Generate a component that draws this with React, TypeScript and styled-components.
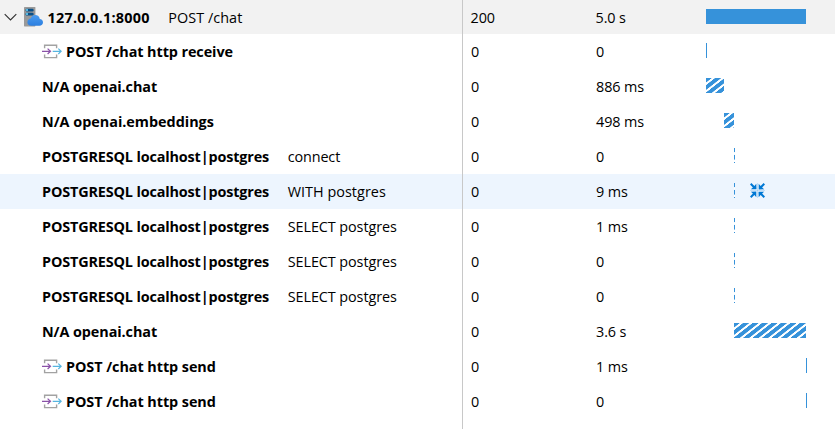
import React from 'react';
import styled, { createGlobalStyle, css } from 'styled-components';

const Global = createGlobalStyle`
  html, body { margin: 0; background: #fff; overflow: hidden; }
  * { box-sizing: border-box; }
`;

const Grid = styled.div`
  width: 835px;
  height: 429px;
  overflow: hidden;
  color: #000;
  font: 14.4px/20px "Open Sans", "Noto Sans", sans-serif;
  white-space: pre;
`;

const NameCell = styled.div<{ $indent: number }>`
  display: flex;
  align-items: center;
  padding-left: ${p => p.$indent}px;
  border-right: 1px solid #c8c8c8;
`;

const Name = styled.span<{ $spacing: number }>`
  font-weight: 700;
  letter-spacing: ${p => p.$spacing}px;
`;

const Detail = styled.span<{ $spacing: number }>`
  margin-left: 18.6px;
  letter-spacing: ${p => p.$spacing}px;
`;

const Value = styled.div`
  display: flex;
  align-items: center;
  padding-left: 8px;
  letter-spacing: -0.1px;
`;

const Row = styled.div<{ $root?: boolean; $hover?: boolean }>`
  display: grid;
  grid-template-columns: 463px 125px 118px 1fr;
  height: ${p => (p.$root ? 34 : 35)}px;
  background: ${p => (p.$root ? '#f2f2f2' : p.$hover ? '#edf5fe' : '#fff')};

  ${p => p.$root && css`
    ${Name}, ${Detail}, ${Value} { padding-top: 2px; }
    ${Value} { margin-left: -0.5px; }
  `}
`;

const Track = styled.div<{ $start: number }>`
  display: flex;
  align-items: flex-start;
  padding: 9px 0 0 ${p => p.$start}px;
`;

const Bar = styled.div<{ $width: number; $striped?: boolean }>`
  width: ${p => p.$width}px;
  height: 15px;
  background: #3692da;
  ${p => p.$striped && css`
    background: repeating-linear-gradient(142deg, #3692da 0 3.3px, #fff 3.9px 5.4px, #3692da 5.83px);
    background-size: 87px 15px;
  `}
`;

const Icon = styled.svg<{ $gap?: number }>`
  flex: none;
  display: block;
  margin-right: ${p => p.$gap ?? 0}px;
`;

const FocusIcon = styled.svg`
  display: block;
  margin-left: 15px;
`;

const Chevron = () => (
  <Icon $gap={6} width="13" height="9" viewBox="0 0 13 9">
    <path d="M.7 1.2 6.5 7 12.3 1.2" fill="none" stroke="#303030" strokeWidth="1.1" />
  </Icon>
);

const Server = () => (
  <Icon $gap={4.5} width="20" height="20" viewBox="0 0 20 20">
    <defs>
      <linearGradient id="cloud" x1="0" y1="0" x2="0" y2="1">
        <stop stopColor="#4a9cf0" />
        <stop offset="1" stopColor="#2c7fe0" />
      </linearGradient>
    </defs>
    <rect x="1" y="0" width="11.4" height="19.4" rx=".6" fill="#9a9a9a" />
    <rect x="2.6" y="1.8" width="8" height="2.7" rx="1.2" fill="#0a5088" />
    <rect x="2.6" y="5.7" width="8" height="2.7" rx="1.2" fill="#0a5088" />
    <circle cx="4" cy="3.1" r="1" fill="#70dcff" />
    <circle cx="4" cy="7" r="1" fill="#70dcff" />
    <path d="M8.2 18.8c-2.2 0-3.8-1.5-3.8-3.6 0-2 1.4-3.4 3.3-3.6.5-2.3 2.2-3.7 4.5-3.7 2.5 0 4.2 1.6 4.6 4 1.8.1 3.2 1.5 3.2 3.4 0 2-1.5 3.5-3.6 3.5Z" fill="url(#cloud)" />
  </Icon>
);

const Request = () => (
  <Icon $gap={4} width="20" height="15" viewBox="0 0 20 15">
    <path d="M2.6 4.3V1.2H14.6V4.3M2.6 10.5v3.1H14.6v-3.1" fill="none" stroke="#a2a2a2" strokeWidth="1.4" />
    <path d="M0 7.3h8.4M5.6 4.6l2.9 2.7-2.9 2.7" fill="none" stroke="#8a52a8" strokeWidth="1.2" />
    <path d="M10.7 7.3h8.4M16.3 4.6l2.9 2.7-2.9 2.7" fill="none" stroke="#57b5e0" strokeWidth="1.2" />
  </Icon>
);

const Focus = () => (
  <FocusIcon width="15" height="15" viewBox="0 0 15 15">
    <path d="M0 7.5h15M7.5 0v15" stroke="#0078d4" strokeOpacity=".18" />
    {[0, 90, 180, 270].map(angle => (
      <path key={angle} transform={`rotate(${angle} 7.5 7.5)`} d="M6.5 6.3H.8L2.9 4.4 0 1.4 1.4 0 4.4 2.9 6.3.8Z" fill="#0078d4" />
    ))}
  </FocusIcon>
);

type Span = {
  name: string; spacing: number; detail?: string; detailSpacing?: number; code: string; time: string;
  start: number; width: number; striped?: boolean; icon?: boolean; root?: boolean; hover?: boolean;
};

const database = {
  name: 'POSTGRESQL localhost|postgres', spacing: -0.14, code: '0', start: 28, width: 1, striped: true,
};

const spans: Span[] = [
  { name: '127.0.0.1:8000', spacing: 0.25, detail: 'POST /chat', detailSpacing: 0.05, code: '200', time: '5.0 s', start: 0, width: 100, root: true },
  { name: 'POST /chat http receive', spacing: -0.08, code: '0', time: '0', start: 0, width: 1, icon: true },
  { name: 'N/A openai.chat', spacing: -0.08, code: '0', time: '886 ms', start: 0, width: 18, striped: true },
  { name: 'N/A openai.embeddings', spacing: -0.01, code: '0', time: '498 ms', start: 18, width: 10, striped: true },
  { ...database, detail: 'connect', detailSpacing: -0.13, time: '0' },
  { ...database, detail: 'WITH postgres', detailSpacing: 0.03, time: '9 ms', hover: true },
  { ...database, detail: 'SELECT postgres', detailSpacing: -0.08, time: '1 ms' },
  { ...database, detail: 'SELECT postgres', detailSpacing: -0.08, time: '0' },
  { ...database, detail: 'SELECT postgres', detailSpacing: -0.08, time: '0' },
  { name: 'N/A openai.chat', spacing: -0.08, code: '0', time: '3.6 s', start: 28, width: 72, striped: true },
  { name: 'POST /chat http send', spacing: -0.06, code: '0', time: '1 ms', start: 100, width: 1, icon: true },
  { name: 'POST /chat http send', spacing: -0.06, code: '0', time: '0', start: 100, width: 1, icon: true },
  { name: '', spacing: 0, code: '', time: '', start: 0, width: 0 },
];

export default function App() {
  return (
    <>
      <Global />
      <Grid>
        {spans.map((s, i) => (
          <Row key={i} $root={s.root} $hover={s.hover}>
            <NameCell $indent={s.root ? 4 : 42}>
              {s.root && <><Chevron /><Server /></>}
              {s.icon && <Request />}
              <Name $spacing={s.spacing}>{s.name}</Name>
              {s.detail && <Detail $spacing={s.detailSpacing ?? 0}>{s.detail}</Detail>}
            </NameCell>
            <Value>{s.code}</Value>
            <Value>{s.time}</Value>
            <Track $start={s.start}>
              <Bar $width={s.width} $striped={s.striped} />
              {s.hover && <Focus />}
            </Track>
          </Row>
        ))}
      </Grid>
    </>
  );
}
